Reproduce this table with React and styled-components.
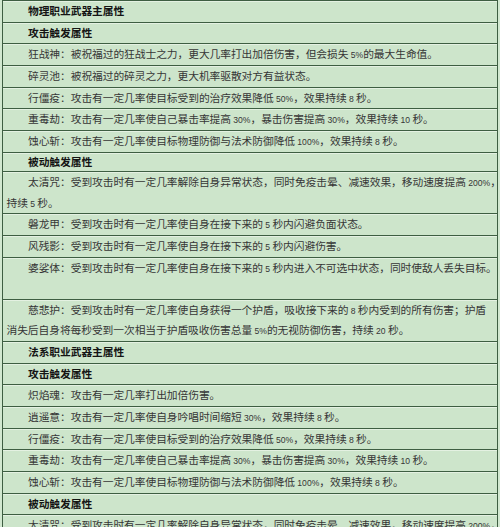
import styled, { createGlobalStyle } from 'styled-components';

const GlobalStyle = createGlobalStyle`
  html, body {
    margin: 0;
    padding: 0;
  }
  body {
    width: 500px;
    height: 527px;
    overflow: hidden;
    background: #d2e8d0;
    font-family: "Noto Sans CJK SC", "Noto Sans", sans-serif;
  }
`;

const Table = styled.div`
  box-sizing: border-box;
  width: 496px;
  margin: 0 2px;
  border-left: 1px solid #3e5e42;
  border-right: 1px solid #3e5e42;
  background: #cde5cb;
`;

const Row = styled.div`
  border-top: 1px solid #3e5e42;
  box-shadow: inset 0 1px 0 #e4f1e2;
  padding: 0 0 0 3.5px;
`;

const Line = styled.div`
  height: ${({ $tight }) => ($tight ? '18.3px' : '20.67px')};
  line-height: ${({ $tight }) => ($tight ? '18.3px' : '20.67px')};
  padding-left: ${({ $indent }) => ($indent ? '2em' : '0')};
  font-size: 10.75px;
  letter-spacing: -0.07px;
  font-weight: ${({ $head }) => ($head ? 700 : 400)};
  color: ${({ $head }) => ($head ? '#141414' : '#363636')};
  white-space: nowrap;
`;

const Num = styled.span`
  font-family: "Liberation Sans", Arial, sans-serif;
  font-size: 8.6px;
  letter-spacing: 0;
`;

const rows = [
  { head: true, lines: ['物理职业武器主属性'] },
  { head: true, lines: ['攻击触发属性'] },
  { lines: ['狂战神：被祝福过的狂战士之力，更大几率打出加倍伤害，但会损失 5%的最大生命值。'] },
  { lines: ['碎灵池：被祝福过的碎灵之力，更大机率驱散对方有益状态。'] },
  { lines: ['行僵疫：攻击有一定几率使目标受到的治疗效果降低 50%，效果持续 8 秒。'] },
  { lines: ['重毒劫：攻击有一定几率使自己暴击率提高 30%，暴击伤害提高 30%，效果持续 10 秒。'] },
  { lines: ['蚀心斩：攻击有一定几率使目标物理防御与法术防御降低 100%，效果持续 8 秒。'] },
  { head: true, tight: true, lines: ['被动触发属性'] },
  { lines: ['太清咒：受到攻击时有一定几率解除自身异常状态，同时免疫击晕、减速效果，移动速度提高 200%，', '持续 5 秒。'] },
  { lines: ['磐龙甲：受到攻击时有一定几率使自身在接下来的 5 秒内闪避负面状态。'] },
  { lines: ['风残影：受到攻击时有一定几率使自身在接下来的 5 秒内闪避伤害。'] },
  { lines: ['婆娑体：受到攻击时有一定几率使自身在接下来的 5 秒内进入不可选中状态，同时使敌人丢失目标。', ''] },
  { lines: ['慈悲护：受到攻击时有一定几率使自身获得一个护盾，吸收接下来的 8 秒内受到的所有伤害；护盾', '消失后自身将每秒受到一次相当于护盾吸收伤害总量 5%的无视防御伤害，持续 20 秒。'] },
  { head: true, lines: ['法系职业武器主属性'] },
  { head: true, lines: ['攻击触发属性'] },
  { lines: ['炽焰魂：攻击有一定几率打出加倍伤害。'] },
  { lines: ['逍遥意：攻击有一定几率使自身吟唱时间缩短 30%，效果持续 8 秒。'] },
  { lines: ['行僵疫：攻击有一定几率使目标受到的治疗效果降低 50%，效果持续 8 秒。'] },
  { lines: ['重毒劫：攻击有一定几率使自己暴击率提高 30%，暴击伤害提高 30%，效果持续 10 秒。'] },
  { lines: ['蚀心斩：攻击有一定几率使目标物理防御与法术防御降低 100%，效果持续 8 秒。'] },
  { head: true, lines: ['被动触发属性'] },
  { lines: ['太清咒：受到攻击时有一定几率解除自身异常状态，同时免疫击晕、减速效果，移动速度提高 200%，', '持续 5 秒。'] },
];

// digits in the source page use a smaller latin face
function renderText(text) {
  return text.split(/(\d+%?)/).map((part, i) =>
    /^\d/.test(part) ? <Num key={i}>{part}</Num> : part
  );
}

export default function App() {
  return (
    <>
      <GlobalStyle />
      <Table>
        {rows.map((row, i) => (
          <Row key={i}>
            {row.lines.map((line, j) => (
              <Line key={j} $indent={j === 0} $head={row.head} $tight={row.tight}>
                {renderText(line)}
              </Line>
            ))}
          </Row>
        ))}
      </Table>
    </>
  );
}
